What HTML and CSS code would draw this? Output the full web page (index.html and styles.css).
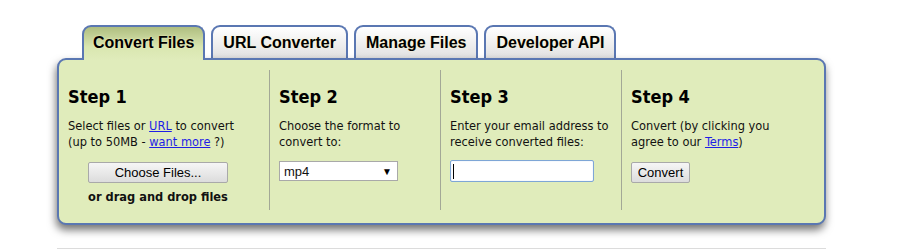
FILE: index.html
```html
<!DOCTYPE html>
<html lang="en">
<head>
  <meta charset="UTF-8" />
  <title>Online Converter</title>
  <link rel="stylesheet" href="styles.css">
</head>
<body>

<div class="wrapper">
  <div class="tabs">
    <div class="tab active">Convert Files</div>
    <div class="tab">URL Converter</div>
    <div class="tab">Manage Files</div>
    <div class="tab">Developer API</div>
  </div>

  <div class="panel">
    <div class="step step-one">
      <h3>Step 1</h3>
      <p>Select files or <a href="#">URL</a> to convert<br>(up to 50MB - <a href="#">want more</a> ?)</p>
      <div class="center">
        <button class="btn choose">Choose Files...</button>
        <div class="drop">or drag and drop files</div>
      </div>
    </div>

    <div class="step step-two">
      <h3>Step 2</h3>
      <p>Choose the format to<br>convert to:</p>
      <div class="select">
        <span>mp4</span>
        <span class="arrow">&#9660;</span>
      </div>
    </div>

    <div class="step step-three">
      <h3>Step 3</h3>
      <p>Enter your email address to<br>receive converted files:</p>
      <div class="email">
        <input type="text" />
        <span class="caret"></span>
      </div>
    </div>

    <div class="step step-four">
      <h3>Step 4</h3>
      <p>Convert (by clicking you<br>agree to our <a href="#">Terms</a>)</p>
      <button class="btn convert">Convert</button>
    </div>
  </div>

  <div class="rule"></div>
</div>

</body>
</html>
```

FILE: styles.css
```css
body {
  margin: 0;
  padding: 0;
  background-color: #fff;
  font-family: 'DejaVu Sans Condensed', 'DejaVu Sans', sans-serif;
  color: #111;
}
.wrapper {
  width: 769px;
  margin-left: 57px;
  padding-top: 25px;
}
.tabs {
  display: flex;
  padding-left: 25px;
  margin-bottom: -2px;
}
.tab {
  position: relative;
  height: 31px;
  line-height: 32px;
  padding: 0 10px;
  margin-right: 6px;
  border: 2px solid #5a77b2;
  border-bottom: none;
  border-radius: 9px 9px 0 0;
  background: linear-gradient(#ffffff, #e1e1e1);
  font-family: 'Liberation Sans', Arial, sans-serif;
  font-weight: bold;
  font-size: 16px;
  color: #000;
  text-shadow: 0 0 2px #fff6c0;
}
.tab.active {
  z-index: 2;
  height: 33px;
  padding: 0 9px;
  background: linear-gradient(#afbe80, #d9e6b0 60%, #e0ecbb);
}
.panel {
  position: relative;
  z-index: 1;
  display: flex;
  padding: 10px 0 13px;
  background-color: #e0ecbb;
  border: 2px solid #5a77b2;
  border-radius: 9px;
  box-shadow: -1px 5px 8px rgba(0,0,0,0.55);
}
.step {
  height: 140px;
  padding-left: 9px;
  box-sizing: border-box;
  border-left: 1px solid #a3a896;
}
.step-one {
  width: 210px;
  padding-right: 21px;
  border-left: none;
}
.step-two {
  width: 171px;
}
.step-three {
  width: 181px;
}
.step-four {
  width: 202px;
}
h3 {
  margin: 16px 0 0;
  font-size: 18px;
  line-height: 22px;
  color: #000;
}
p {
  margin: 10px 0 0;
  font-size: 12.7px;
  line-height: 16px;
}
a {
  color: #1f1fe6;
}
.center {
  text-align: center;
}
.btn {
  font-family: 'Liberation Sans', Arial, sans-serif;
  font-size: 13px;
  color: #000;
  background: linear-gradient(#f6f6f6, #dcdcdc);
  border: 1px solid #a9a9a9;
  border-radius: 2px;
  padding: 0;
  height: 21px;
}
.choose {
  width: 140px;
  margin-top: 12px;
}
.drop {
  margin-top: 6px;
  font-weight: bold;
  font-size: 12.7px;
}
.select {
  display: flex;
  justify-content: space-between;
  align-items: center;
  width: 119px;
  height: 20px;
  margin-top: 11px;
  padding: 0 5px 0 4px;
  box-sizing: border-box;
  background-color: #fff;
  border: 1px solid #a9a9a9;
  font-family: 'Liberation Sans', Arial, sans-serif;
  font-size: 13px;
}
.select .arrow {
  font-size: 10px;
  color: #000;
}
.email {
  position: relative;
  margin-top: 10px;
}
.email input {
  width: 144px;
  height: 22px;
  box-sizing: border-box;
  border: 1px solid #7ea6d6;
  border-radius: 2px;
  box-shadow: inset 0 0 1px #a9c6ea;
  background-color: #fff;
  outline: none;
}
.email .caret {
  position: absolute;
  left: 3px;
  top: 4px;
  width: 1px;
  height: 15px;
  background-color: #000;
}
.convert {
  width: 59px;
  margin-top: 12px;
}
.rule {
  margin-top: 23px;
  height: 1px;
  background-color: #dcdcdc;
}
```
